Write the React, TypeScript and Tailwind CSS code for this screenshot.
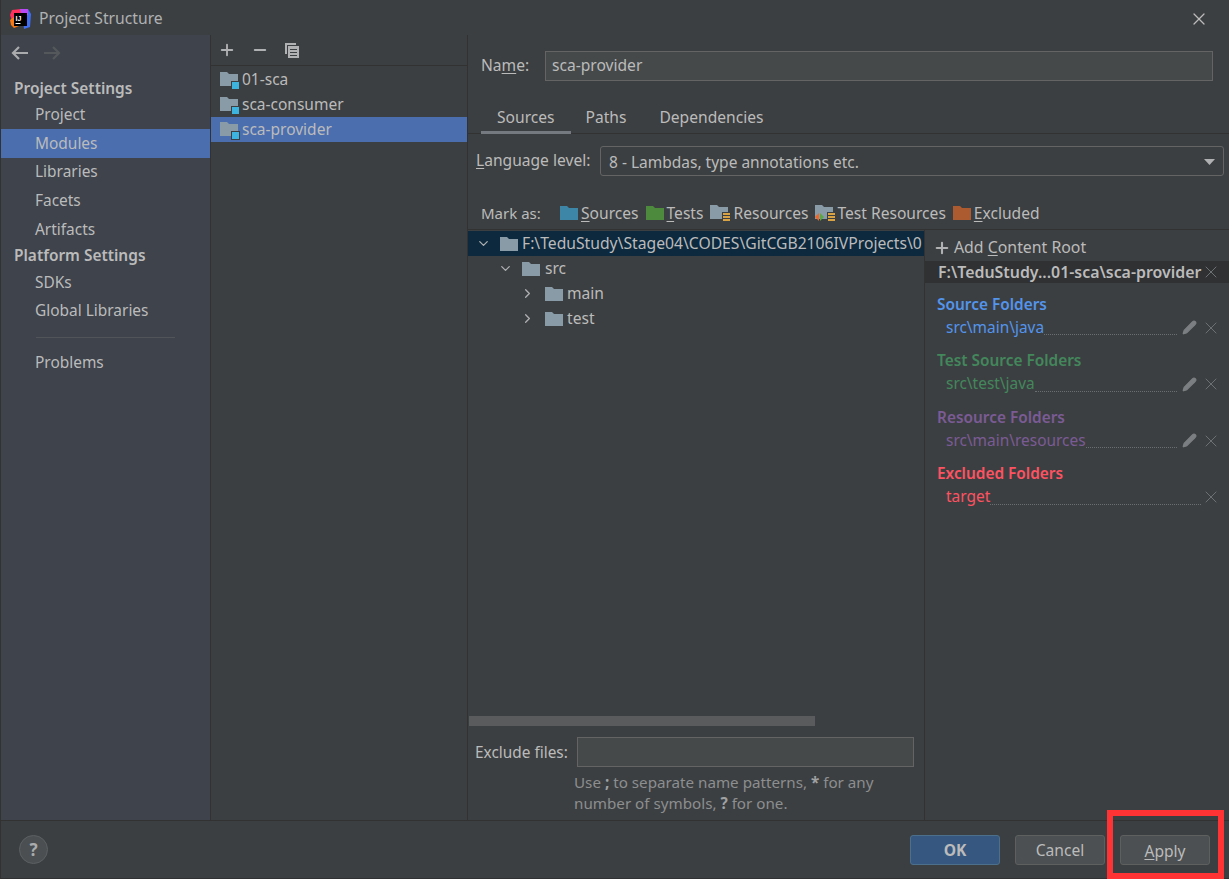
import { ChevronDown, ChevronRight, Minus, Plus, X, Pencil } from "lucide-react";

const FONT = "font-['Noto_Sans','Open_Sans',sans-serif]";

const Folder = ({ color = "#8a9ba8", className = "" }: { color?: string; className?: string }) => (
  <svg width="18" height="14" viewBox="0 0 18 14" className={className}>
    <path d="M0 0h7l2 2h9v12H0z" fill={color} />
  </svg>
);

const ModuleFolder = () => (
  <svg width="20" height="20" viewBox="0 0 20 20" className="shrink-0">
    <path d="M0 2h7l2 2h9v12H0z" fill="#8a9ba8" />
    <rect x="11" y="11" width="9" height="9" fill="#3c3f41" />
    <rect x="12" y="12" width="7" height="7" fill="#3db3e0" />
  </svg>
);

const Logo = () => (
  <svg width="21" height="20" viewBox="0 0 21 20" className="shrink-0">
    <path d="M0 6 2 1l9-1 3 3-3 6-9 3z" fill="#fe315d" />
    <path d="M12 0h6l3 5-1 13-6 2z" fill="#3f6ff0" />
    <path d="M0 11 4 8l5 9-5 2-3-3z" fill="#f97a12" />
    <path d="M10 0h8v6l-6 3z" fill="#b74af7" />
    <rect x="4" y="4" width="13" height="13" fill="#000" />
    <rect x="5.5" y="14" width="5" height="1" fill="#fff" />
    <text x="5.5" y="11.5" fontSize="7" fontWeight="700" fill="#fff" fontFamily="'Liberation Sans', sans-serif">IJ</text>
  </svg>
);

const ResourceBars = () => (
  <svg width="8" height="9" viewBox="0 0 8 9" className="absolute right-0 bottom-0">
    <rect width="8" height="9" fill="#3c3f41" />
    <rect x="1" y="1" width="7" height="2" fill="#d9a343" />
    <rect x="1" y="4" width="7" height="2" fill="#d9a343" />
    <rect x="1" y="7" width="7" height="2" fill="#d9a343" />
  </svg>
);

const NavArrow = ({ color, flip }: { color: string; flip?: boolean }) => (
  <svg width="17" height="14" viewBox="0 0 17 14" className={flip ? "-scale-x-100" : ""}>
    <path d="M17 7H2M8 1 2 7l6 6" fill="none" stroke={color} strokeWidth="2.2" />
  </svg>
);

const NavItem = ({ label, active }: { label: string; active?: boolean }) => (
  <div className={`h-[28.75px] pl-[34px] flex items-center text-[15.45px] ${active ? "bg-[#4b6eaf] text-[#bbbbbb]" : ""}`}>{label}</div>
);

const NavHeader = ({ label, height, offset }: { label: string; height: string; offset: string }) => (
  <div className={`${height} ${offset} pl-[13px] flex items-center text-[15.45px] font-semibold text-[#bbbbbb]`}>{label}</div>
);

const ModuleRow = ({ label, active }: { label: string; active?: boolean }) => (
  <div className={`h-[25px] pl-[9px] flex items-center gap-[2px] text-[15.5px] ${active ? "bg-[#4b6eaf]" : ""}`}>
    <ModuleFolder />
    <span>{label}</span>
  </div>
);

const MarkItem = ({ icon, children, gap = "gap-[3px]" }: { icon: React.ReactNode; children: React.ReactNode; gap?: string }) => (
  <div className={`flex items-center ${gap}`}>
    {icon}
    <span>{children}</span>
  </div>
);

const FolderGroup = ({ title, path, color, editable = true }: { title: string; path: string; color: string; editable?: boolean }) => (
  <div className="h-[56.5px] pl-[12px] pr-[8px]">
    <div className="h-[24px] flex items-center text-[15.4px] font-semibold" style={{ color }}>{title}</div>
    <div className="h-[22px] pl-[9px] flex items-center">
      <span className="text-[15.45px]" style={{ color }}>{path}</span>
      <div className="flex-1 h-[15px] border-b border-dotted border-[#6b6e70]" />
      {editable && <Pencil size={15} className="ml-[5px] text-[#7c7f82] fill-[#7c7f82]" />}
      <X size={20} strokeWidth={1.2} className={`${editable ? "ml-[4px]" : "ml-0"} text-[#6e7174]`} />
    </div>
  </div>
);

export default function App() {
  return (
    <div className={`relative w-[1229px] h-[879px] flex flex-col bg-[#3c3f41] text-[#bbbbbb] overflow-hidden border-l border-[#323232] ${FONT}`}>
      {/* title bar */}
      <div className="h-[35px] shrink-0 flex items-center pl-[9px] pr-[20px] pt-[2px] gap-[8px] text-[15.7px] text-[#afb1b3]">
        <Logo />
        <span>Project Structure</span>
        <X size={20} strokeWidth={1.5} className="ml-auto text-[#bbbbbb]" />
      </div>

      <div className="flex-1 flex min-h-0">
        {/* settings nav */}
        <div className="w-[210px] shrink-0 bg-[#3e434c] border-r border-[#323232]">
          <div className="h-[40px] flex items-center pl-[10px] gap-[16px] pb-[4px]">
            <NavArrow color="#a9abad" />
            <NavArrow color="#55585a" flip />
          </div>
          <NavHeader label="Project Settings" height="h-[25px]" offset="pt-[3px]" />
          <NavItem label="Project" />
          <NavItem label="Modules" active />
          <NavItem label="Libraries" />
          <NavItem label="Facets" />
          <NavItem label="Artifacts" />
          <NavHeader label="Platform Settings" height="h-[24px]" offset="pt-0" />
          <NavItem label="SDKs" />
          <NavItem label="Global Libraries" />
          <div className="mx-[35px] mt-[12px] mb-[10px] border-t border-[#515458]" />
          <NavItem label="Problems" />
        </div>

        {/* modules */}
        <div className="w-[257px] shrink-0 border-r border-[#323232]">
          <div className="h-[31px] flex items-center pl-[7px] gap-[15px] border-b border-[#323232]">
            <Plus size={18} strokeWidth={2.5} className="text-[#afb1b3]" />
            <Minus size={18} strokeWidth={2.5} className="text-[#afb1b3]" />
            <svg width="16" height="16" viewBox="0 0 16 16">
              <path d="M1 1h11v2H3v9H1z" fill="#afb1b3" />
              <rect x="4" y="4" width="11" height="12" fill="#afb1b3" />
              <rect x="6" y="7" width="7" height="1" fill="#3c3f41" />
              <rect x="6" y="10" width="7" height="1" fill="#3c3f41" />
              <rect x="6" y="13" width="7" height="1" fill="#3c3f41" />
            </svg>
          </div>
          <div className="pt-[1px]">
            <ModuleRow label="01-sca" />
            <ModuleRow label="sca-consumer" />
            <ModuleRow label="sca-provider" active />
          </div>
        </div>

        {/* module details */}
        <div className="flex-1 min-w-0 flex flex-col text-[15.6px]">
          <div className="h-[51px] shrink-0 flex items-start pt-[16px] pl-[13px] pr-[16px]">
            <span className="w-[64px] mt-[3px]">Na<span className="underline underline-offset-2">m</span>e:</span>
            <div className="flex-1 h-[30px] px-[6px] flex items-center bg-[#45494a] border border-[#646464]">sca-provider</div>
          </div>

          <div className="h-[48px] shrink-0 flex items-end pl-[13px] border-b border-[#323232]">
            <div className="h-[35px] px-[16px] pt-[5px] flex items-center border-b-[3px] border-[#747a80] -mb-[1px]">Sources</div>
            <div className="h-[35px] pl-[15px] pr-[16px] pt-[5px] flex items-center">Paths</div>
            <div className="h-[35px] pl-[17px] pt-[5px] flex items-center">Dependencies</div>
          </div>

          <div className="h-[43px] shrink-0 flex items-start pt-[12px] pl-[8px] pr-[5px]">
            <span className="w-[124px] mt-[3px]"><span className="underline underline-offset-2">L</span>anguage level:</span>
            <div className="flex-1 h-[30px] pl-[8px] pr-[8px] pt-[3px] flex items-center justify-between bg-[#3c3f41] border border-[#646464] rounded-[3px]">
              <span className="text-[15.5px]">8 - Lambdas, type annotations etc.</span>
              <svg width="11" height="6" viewBox="0 0 11 6" className="-mt-[2px]"><path d="M0 0h11L5.5 6z" fill="#afb1b3" /></svg>
            </div>
          </div>

          <div className="h-[53px] shrink-0 flex items-center pl-[13px] pt-[21px] border-b border-[#323232]">
            <span className="w-[79px] text-[15px]">Mark as:</span>
            <div className="flex items-center gap-[7px]">
              <MarkItem icon={<Folder color="#3d86a8" />}><span className="underline underline-offset-2">S</span>ources</MarkItem>
              <MarkItem icon={<Folder color="#4d8a3e" />}><span className="underline underline-offset-2">T</span>ests</MarkItem>
              <MarkItem icon={<span className="relative block w-[20px] h-[16px]"><Folder /><ResourceBars /></span>}>Resources</MarkItem>
              <MarkItem gap="gap-[2px]" icon={<span className="relative block w-[20px] h-[16px]"><Folder /><ResourceBars /><svg width="9" height="8" viewBox="0 0 9 8" className="absolute left-0 bottom-0"><path d="M0 4l4-4v8z" fill="#f26522" /><path d="M5 0l4 4-4 4z" fill="#5aa845" /></svg></span>}>Test Resources</MarkItem>
              <MarkItem icon={<Folder color="#ac5a2f" />}><span className="underline underline-offset-2">E</span>xcluded</MarkItem>
            </div>
          </div>

          <div className="flex-1 min-h-0 flex">
            {/* content tree */}
            <div className="w-[457px] shrink-0 flex flex-col border-r border-[#323232]">
              <div className="h-[486px] shrink-0 relative overflow-hidden">
                <div className="h-[25px] mt-[1px] pl-[8px] flex items-center bg-[#0d293e] whitespace-nowrap">
                  <ChevronDown size={15} className="shrink-0 text-[#afb1b3]" />
                  <Folder className="shrink-0 ml-[9px]" />
                  <span className="ml-[4px] text-[15.7px]">F:\TeduStudy\Stage04\CODES\GitCGB2106IVProjects\0</span>
                </div>
                <div className="h-[25px] pl-[30px] flex items-center">
                  <ChevronDown size={15} className="text-[#afb1b3]" />
                  <Folder className="ml-[9px]" />
                  <span className="ml-[5px]">src</span>
                </div>
                <div className="h-[25px] pl-[52px] flex items-center">
                  <ChevronRight size={15} className="text-[#afb1b3]" />
                  <Folder className="ml-[10px]" />
                  <span className="ml-[4px]">main</span>
                </div>
                <div className="h-[25px] pl-[52px] flex items-center">
                  <ChevronRight size={15} className="text-[#afb1b3]" />
                  <Folder className="ml-[10px]" />
                  <span className="ml-[4px]">test</span>
                </div>
              </div>
              <div className="h-[10px] ml-[1px] w-[346px] shrink-0 bg-[#595b5d]" />
              <div className="flex items-center pl-[7px] pr-[10px] mt-[11px] h-[30px] shrink-0">
                <span className="w-[102px] shrink-0 pt-[2px] text-[15.4px]">Exclude files:</span>
                <div className="flex-1 h-[30px] bg-[#45494a] border border-[#646464]" />
              </div>
              <div className="ml-[106px] mt-[5px] text-[15.2px] leading-[20.5px] text-[#8c8e90] whitespace-nowrap">
                Use <b className="text-[#a0a2a4]">;</b> to separate name patterns, <b className="text-[#a0a2a4]">*</b> for any<br />
                number of symbols, <b className="text-[#a0a2a4]">?</b> for one.
              </div>
            </div>

            {/* content roots */}
            <div className="flex-1 min-w-0">
              <div className="h-[31px] pl-[8px] pt-[5px] flex items-center gap-[3px] text-[15.85px]">
                <Plus size={18} strokeWidth={2.8} className="text-[#afb1b3]" />
                <span>Add <span className="underline underline-offset-2">C</span>ontent Root</span>
              </div>
              <div className="h-[22px] pl-[13px] pr-[8px] pt-[2px] flex items-center justify-between bg-[#2f3133] text-[15.9px] font-semibold whitespace-nowrap">
                <span>F:\TeduStudy...01-sca\sca-provider</span>
                <X size={20} strokeWidth={1.2} className="shrink-0 -ml-[2px] -mt-[2px] text-[#6e7174]" />
              </div>
              <div className="pt-[9.5px]">
                <FolderGroup title="Source Folders" path="src\main\java" color="#5394ec" />
                <FolderGroup title="Test Source Folders" path="src\test\java" color="#43875c" />
                <FolderGroup title="Resource Folders" path="src\main\resources" color="#7b5b95" />
                <FolderGroup title="Excluded Folders" path="target" color="#ff5261" editable={false} />
              </div>
            </div>
          </div>
        </div>
      </div>

      {/* footer */}
      <div className="h-[59px] shrink-0 flex items-center border-t border-[#323232] border-b-[#2f3133] border-b pl-[18px] text-[15.6px]">
        <div className="w-[29px] h-[29px] rounded-full bg-[#4b4f51] border border-[#5c6063] flex items-center justify-center font-bold text-[#a9abad] text-[17px]">?</div>
        <div className="ml-auto flex items-center gap-[15px] pr-[19px] mt-[1px]">
          <div className="w-[90px] h-[30px] pt-[2px] flex items-center justify-center rounded-[3px] bg-[#365880] border border-[#4c708c] font-bold">OK</div>
          <div className="w-[90px] h-[30px] pt-[2px] flex items-center justify-center rounded-[3px] bg-[#4c5052] border border-[#5e6060]">Cancel</div>
          <div className="w-[90px] h-[30px] pt-[4px] flex items-center justify-center rounded-[3px] bg-[#4c5052] border border-[#5e6060]"><span><span className="underline underline-offset-2">A</span>pply</span></div>
        </div>
      </div>

      {/* annotation drawn over the screenshot */}
      <div className="absolute left-[1106px] top-[810px] w-[117px] h-[69px] border-[6px] border-[#ff3333]" />
    </div>
  );
}
